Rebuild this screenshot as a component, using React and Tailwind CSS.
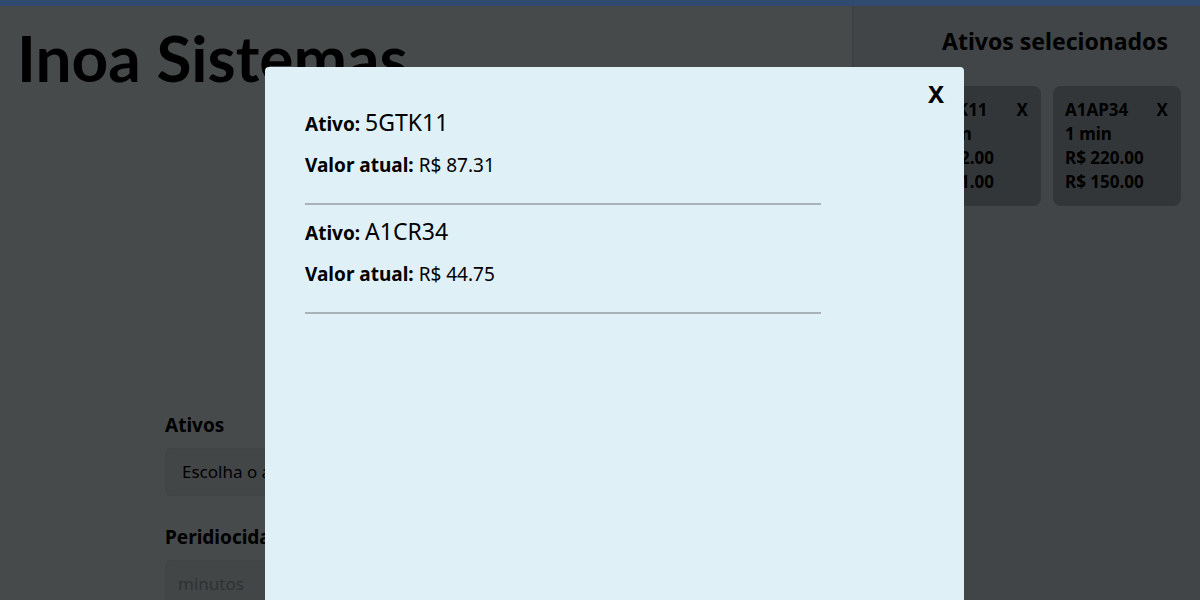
import React from "react";

const ativosSelecionados = [
  { nome: "5GTK11", periodo: "1 min", max: "R$ 92.00", min: "R$ 81.00" },
  { nome: "A1AP34", periodo: "1 min", max: "R$ 220.00", min: "R$ 150.00" },
];

const cotacoes = [
  { nome: "5GTK11", valor: "R$ 87.31" },
  { nome: "A1CR34", valor: "R$ 44.75" },
];

const font = { fontFamily: "'Noto Sans', Lato, sans-serif" };

const App = () => {
  return (
    <div className="relative h-[600px] overflow-hidden bg-[#8c9496]" style={font}>
      <div className="h-[6px] bg-[#6094e0]" />

      <div className="flex h-[594px]">
        <main className="flex-1">
          <h1 className="pl-[17px] pt-[20px] font-['Lato',sans-serif] text-[64px] font-bold leading-[64px] text-black">
            Inoa Sistemas
          </h1>

          <form className="mt-[322px] ml-[165px] w-[500px]">
            <label className="block text-[19px] font-bold leading-[26px] text-black">
              Ativos
            </label>
            <div className="mt-[10px] h-[48px] rounded-md border border-[#7e8688] bg-[#848c8e] px-[16px] flex items-center text-[17px] text-black">
              Escolha o ativo
            </div>

            <label className="mt-[28px] block text-[19px] font-bold leading-[26px] text-black">
              Peridiocidade
            </label>
            <div className="mt-[10px] h-[48px] rounded-md border border-[#7e8688] bg-[#848c8e] px-[12px] flex items-center text-[17px] text-[#5e6466]">
              minutos
            </div>
          </form>
        </main>

        <aside className="w-[348px] border-l-2 border-[#7a8286] bg-[#828a8e] pr-[19px]">
          <h2 className="mt-[20px] pr-[13px] text-right text-[23px] font-bold leading-[30px] text-black">
            Ativos selecionados
          </h2>

          <div className="mt-[30px] flex justify-end gap-[12px]">
            {ativosSelecionados.map((a) => (
              <div
                key={a.nome}
                className="w-[128px] rounded-lg bg-[#646c70] px-[12px] py-[12px] text-[17px] font-bold leading-[24px] text-black"
              >
                <div className="flex justify-between">
                  <span>{a.nome}</span>
                  <span className="pr-[1px]">X</span>
                </div>
                <div>{a.periodo}</div>
                <div>{a.max}</div>
                <div>{a.min}</div>
              </div>
            ))}
          </div>
        </aside>
      </div>

      {/* modal */}
      <div className="absolute inset-0 bg-black/50">
        <div className="absolute left-[265px] top-[67px] h-[600px] w-[699px] rounded-[4px] bg-[#dff0f7] pl-[40px] pt-[40px]">
          <button className="absolute right-[20px] top-[9px] text-[24px] font-bold text-black">
            X
          </button>

          {cotacoes.map((c) => (
            <div key={c.nome} className="w-[516px]">
              <p className="text-[19px] leading-[30px] text-black">
                <span className="font-bold">Ativo: </span>
                <span className="text-[23px]">{c.nome}</span>
              </p>
              <p className="mt-[14px] text-[19px] leading-[24px] text-black">
                <span className="font-bold">Valor atual: </span>
                {c.valor}
              </p>
              <hr className="mt-[26px] mb-[11px] border-t-2 border-[#a9b2b8]" />
            </div>
          ))}
        </div>
      </div>
    </div>
  );
};

export default App;
